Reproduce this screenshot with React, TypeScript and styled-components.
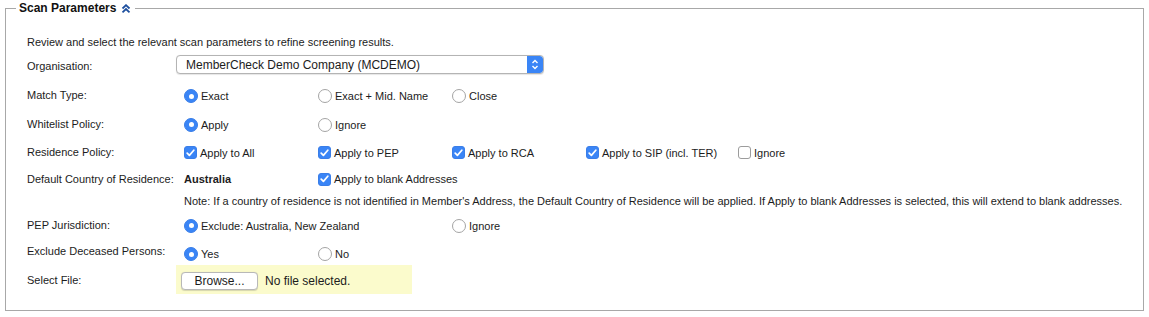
import React from "react";
import styled, { createGlobalStyle } from "styled-components";

const Global = createGlobalStyle`
  html, body { margin: 0; padding: 0; background: #fff; }
  body { font-family: "Liberation Sans", Arial, sans-serif; color: #1c1c1c; }
`;

const Page = styled.div`
  padding: 1px 5px 6px 5px;
`;

const Fieldset = styled.fieldset`
  margin: 0;
  padding: 0 0 16px 10px;
  border: 1px solid #a8a8a8;
  min-width: 0;
`;

const Legend = styled.legend`
  padding: 0 4px 0 3px;
  font-size: 12px;
  font-weight: bold;
  line-height: 14px;
  color: #111;
  display: flex;
  align-items: center;
  gap: 5px;
`;

const Body = styled.div`
  padding: 15px 0 0 11px;
  font-size: 11px;
`;

const Row = styled.div<{ $h: number }>`
  display: flex;
  align-items: center;
  height: ${(p) => p.$h}px;
`;

const Label = styled.div<{ $dy?: number }>`
  width: 149px;
  flex: none;
  position: relative;
  top: ${(p) => p.$dy ?? 0}px;
`;

const Options = styled.div<{ $dy?: number }>`
  display: grid;
  grid-template-columns: 134px 134px 134px 152px auto;
  align-items: center;
  position: relative;
  top: ${(p) => p.$dy ?? 0}px;
`;

const Option = styled.div`
  display: flex;
  align-items: center;
  gap: 3px;
  padding-left: 8px;
  white-space: nowrap;
`;

const Strong = styled.div`
  font-weight: bold;
  padding-left: 8px;
`;

const Note = styled.div`
  padding-left: 157px;
  white-space: nowrap;
`;

const Select = styled.div`
  width: 368px;
  height: 19px;
  box-sizing: border-box;
  border: 1px solid #b4b4b4;
  border-radius: 4px;
  display: flex;
  align-items: center;
  justify-content: space-between;
  font-size: 12px;
  background: #fff;
  align-self: flex-start;
  margin-top: 2px;
  overflow: hidden;
  box-shadow: 0 0.5px 1px rgba(0,0,0,0.1);
`;

const SelectText = styled.span`
  padding-left: 9px;
`;

const SelectArrow = styled.span`
  width: 16px;
  height: 100%;
  background: #3a85f6;
  display: flex;
  align-items: center;
  justify-content: center;
  border-radius: 0 3px 3px 0;
`;

const RadioDot = styled.span<{ $on?: boolean }>`
  width: 14px;
  height: 14px;
  box-sizing: border-box;
  border-radius: 50%;
  flex: none;
  background: ${(p) => (p.$on ? "#3a85f6" : "#fff")};
  border: 1px solid ${(p) => (p.$on ? "#3a7ee8" : "#a4a4a4")};
  display: flex;
  align-items: center;
  justify-content: center;
  &::after {
    content: "";
    width: 5px;
    height: 5px;
    border-radius: 50%;
    background: #fff;
    display: ${(p) => (p.$on ? "block" : "none")};
  }
`;

const Box = styled.span<{ $on?: boolean }>`
  width: 13px;
  height: 13px;
  box-sizing: border-box;
  border-radius: 3px;
  flex: none;
  background: ${(p) => (p.$on ? "#3a85f6" : "#fff")};
  border: 1px solid ${(p) => (p.$on ? "#3a7ee8" : "#9c9c9c")};
  display: flex;
  align-items: center;
  justify-content: center;
`;

const FileBox = styled.div`
  width: 236px;
  height: 29px;
  box-sizing: border-box;
  background: #fbfbcc;
  display: flex;
  align-items: center;
  padding-left: 5px;
  gap: 7px;
  font-size: 12px;
`;

const BrowseButton = styled.button`
  width: 77px;
  height: 18px;
  box-sizing: border-box;
  border: 1px solid #b8b8b8;
  border-radius: 4px;
  background: #fff;
  font-family: inherit;
  font-size: 12px;
  color: #1c1c1c;
  padding: 0;
  margin-top: 2px;
  box-shadow: 0 0.5px 1px rgba(0,0,0,0.15);
`;

const FileText = styled.span`
  margin-top: 2px;
`;

const Radio = ({ on, children }: { on?: boolean; children: React.ReactNode }) => (
  <Option>
    <RadioDot $on={on} />
    <span>{children}</span>
  </Option>
);

const Check = ({ on, children }: { on?: boolean; children: React.ReactNode }) => (
  <Option>
    <Box $on={on}>
      {on && (
        <svg width="9" height="8" viewBox="0 0 9 8">
          <polyline points="1.2,4.2 3.4,6.4 7.8,1.2" fill="none" stroke="#fff" strokeWidth="1.7" strokeLinecap="round" strokeLinejoin="round" />
        </svg>
      )}
    </Box>
    <span>{children}</span>
  </Option>
);

const CollapseIcon = () => (
  <svg width="10" height="9" viewBox="0 0 10 9">
    <polyline points="1.5,4.5 5,1.2 8.5,4.5" fill="none" stroke="#1d4f9e" strokeWidth="1.8" />
    <polyline points="1.5,8.3 5,5 8.5,8.3" fill="none" stroke="#1d4f9e" strokeWidth="1.8" />
  </svg>
);

export default function App() {
  return (
    <Page>
      <Global />
      <Fieldset>
        <Legend>
          Scan Parameters <CollapseIcon />
        </Legend>
        <Body>
          <Row $h={23}>Review and select the relevant scan parameters to refine screening results.</Row>
          <Row $h={27}>
            <Label $dy={-1}>Organisation:</Label>
            <Select>
              <SelectText>MemberCheck Demo Company (MCDEMO)</SelectText>
              <SelectArrow>
                <svg width="8" height="11" viewBox="0 0 8 11">
                  <polyline points="1.5,4 4,1.5 6.5,4" fill="none" stroke="#fff" strokeWidth="1.4" />
                  <polyline points="1.5,7 4,9.5 6.5,7" fill="none" stroke="#fff" strokeWidth="1.4" />
                </svg>
              </SelectArrow>
            </Select>
          </Row>
          <Row $h={30}>
            <Label>Match Type:</Label>
            <Options $dy={1}>
              <Radio on>Exact</Radio>
              <Radio>Exact + Mid. Name</Radio>
              <Radio>Close</Radio>
            </Options>
          </Row>
          <Row $h={29}>
            <Label $dy={-1}>Whitelist Policy:</Label>
            <Options>
              <Radio on>Apply</Radio>
              <Radio>Ignore</Radio>
            </Options>
          </Row>
          <Row $h={27}>
            <Label $dy={-1}>Residence Policy:</Label>
            <Options>
              <Check on>Apply to All</Check>
              <Check on>Apply to PEP</Check>
              <Check on>Apply to RCA</Check>
              <Check on>Apply to SIP (incl. TER)</Check>
              <Check>Ignore</Check>
            </Options>
          </Row>
          <Row $h={24}>
            <Label $dy={1}>Default Country of Residence:</Label>
            <Options $dy={1}>
              <Strong>Australia</Strong>
              <Check on>Apply to blank Addresses</Check>
            </Options>
          </Row>
          <Row $h={22}>
            <Note>
              Note: If a country of residence is not identified in Member's Address, the Default Country of Residence will be applied. If Apply to blank Addresses is selected, this will extend to blank addresses.
            </Note>
          </Row>
          <Row $h={27}>
            <Label $dy={-1}>PEP Jurisdiction:</Label>
            <Options>
              <Radio on>Exclude: Australia, New Zealand</Radio>
              <span />
              <Radio>Ignore</Radio>
            </Options>
          </Row>
          <Row $h={26}>
            <Label $dy={-1}>Exclude Deceased Persons:</Label>
            <Options $dy={2}>
              <Radio on>Yes</Radio>
              <Radio>No</Radio>
            </Options>
          </Row>
          <Row $h={29}>
            <Label>Select File:</Label>
            <FileBox>
              <BrowseButton>Browse...</BrowseButton>
              <FileText>No file selected.</FileText>
            </FileBox>
          </Row>
        </Body>
      </Fieldset>
    </Page>
  );
}
